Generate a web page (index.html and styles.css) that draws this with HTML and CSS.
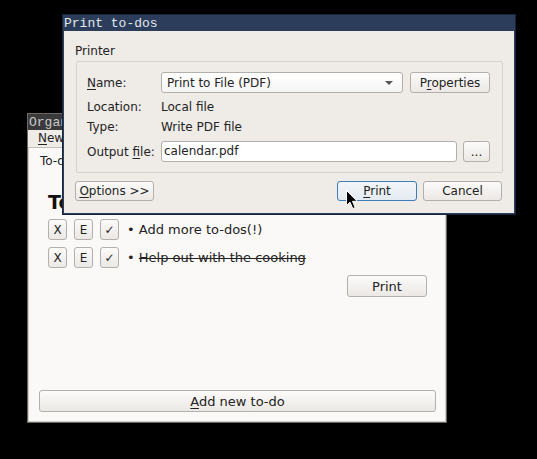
FILE: index.html
```html
<!DOCTYPE html>
<html>
<head>
<meta charset="utf-8">
<link rel="stylesheet" href="styles.css">
</head>
<body>
<div class="win back">
  <div class="titlebar gray">Organizer</div>
  <div class="menubar"><span class="menu"><u>N</u>ew</span></div>
  <div class="content">
    <div class="tablabel">To-do list</div>
    <div class="heading">To-dos</div>
    <div class="todo">
      <button class="btn sq">X</button><button class="btn sq">E</button><button class="btn sq">✓</button>
      <span class="item">• Add more to-dos(!)</span>
    </div>
    <div class="todo">
      <button class="btn sq">X</button><button class="btn sq">E</button><button class="btn sq">✓</button>
      <span class="item">• <s>Help out with the cooking</s></span>
    </div>
    <div class="printrow"><button class="btn wide">Print</button></div>
    <button class="btn addnew"><u>A</u>dd new to-do</button>
  </div>
</div>

<div class="win dialog">
  <div class="titlebar navy">Print to-dos</div>
  <div class="dbody">
    <div class="glabel">Printer</div>
    <div class="group">
      <div class="frow r-name">
        <span class="lbl"><u>N</u>ame:</span>
        <div class="combo"><span>Print to File (PDF)</span><span class="arrow"></span></div>
        <button class="btn props">P<u>r</u>operties</button>
      </div>
      <div class="frow r-loc"><span class="lbl">Location:</span><span>Local file</span></div>
      <div class="frow r-type"><span class="lbl">Type:</span><span>Write PDF file</span></div>
      <div class="frow r-out">
        <span class="lbl">Output <u>f</u>ile:</span>
        <div class="input">calendar.pdf</div>
        <button class="btn dots">...</button>
      </div>
    </div>
    <div class="actions">
      <button class="btn act"><u>O</u>ptions &gt;&gt;</button>
      <span class="spacer"></span>
      <button class="btn act primary"><u>P</u>rint</button>
      <button class="btn act">Cancel</button>
    </div>
  </div>
</div>

<svg class="cursor" width="13" height="20" viewBox="0 0 13 20">
  <path d="M0.5 0.5 L0.5 15.5 L4 12.2 L6.8 18.6 L9.2 17.6 L6.5 11.3 L11.2 11.3 Z" fill="#000" stroke="#fff" stroke-width="1" stroke-linejoin="round"/>
</svg>
</body>
</html>
```

FILE: styles.css
```css
html, body {
  margin: 0;
  padding: 0;
  background: #000;
  width: 537px;
  height: 459px;
  overflow: hidden;
  font-family: "DejaVu Sans", "Noto Sans", sans-serif;
  font-size: 12px;
  color: #232323;
}

u { text-decoration: underline; text-underline-offset: 2px; }

.win {
  position: absolute;
  box-sizing: border-box;
  display: flex;
  flex-direction: column;
}

.titlebar {
  height: 16px;
  flex: none;
  font-family: "Liberation Mono", "DejaVu Sans Mono", monospace;
  font-size: 13px;
  line-height: 17px;
  padding-left: 1px;
  white-space: nowrap;
  overflow: hidden;
}
.titlebar.gray { background: #3a3a3a; color: #c9c9c9; }
.titlebar.navy { background: #2b3d5b; color: #e4e8ee; }

/* back window */
.back {
  left: 27px;
  top: 113px;
  width: 420px;
  height: 310px;
  border: 1px solid #6a6866;
  background: #efebe7;
}
.menubar {
  height: 17px;
  flex: none;
  background: #efebe7;
  line-height: 17px;
  padding-left: 10px;
}
.content {
  flex: 1;
  background: #fbf9f7;
  border-top: 1px solid #c2beba;
  box-shadow: inset 1px 0 0 #d0ccc8, inset -1px 0 0 #d0ccc8, inset 0 -1px 0 #d0ccc8;
  display: flex;
  flex-direction: column;
  padding: 0 10px 10px 11px;
}
.tablabel {
  margin-top: 5px;
  line-height: 16px;
  padding-left: 1px;
}
.heading {
  margin-top: 21px;
  padding-left: 9px;
  font-size: 19px;
  font-weight: bold;
  line-height: 24px;
  color: #111;
}
.todo {
  display: flex;
  align-items: center;
  gap: 7px;
  margin-top: 5px;
  padding-left: 9px;
  height: 21px;
}
.todo + .todo { margin-top: 7px; }
.item { margin-left: 1px; white-space: nowrap; font-size: 13px; }
.item s { text-decoration-thickness: 1px; }

.btn {
  box-sizing: border-box;
  font-family: "DejaVu Sans", "Noto Sans", sans-serif;
  font-size: 12px;
  color: #232323;
  background: linear-gradient(#fcfbfa, #ebe8e5);
  border: 1px solid #b3afab;
  border-radius: 3px;
  padding: 0;
  margin: 0;
  white-space: nowrap;
}
.sq { width: 19px; height: 21px; font-size: 12px; }
.printrow {
  display: flex;
  justify-content: flex-end;
  margin-top: 7px;
  padding-right: 9px;
}
.wide { width: 80px; height: 22px; font-size: 13px; }
.addnew {
  margin-top: auto;
  height: 22px;
  width: 397px;
  font-size: 13px;
}

/* dialog */
.dialog {
  left: 62px;
  top: 14px;
  width: 454px;
  height: 201px;
  border: 1px solid #17243a;
  background: #2b3d5b;
}
.dbody {
  flex: 1;
  margin: 0 1px 1px 1px;
  background: #efebe7;
  padding: 11px 11px 0 12px;
  display: flex;
  flex-direction: column;
}
.glabel {
  line-height: 18px;
  margin-left: -1px;
  margin-bottom: -2px;
}
.group {
  margin-top: 3px;
  border: 1px solid #d6d2cd;
  border-radius: 2px;
  padding: 10px 12px 10px 10px;
  display: flex;
  flex-direction: column;
}
.frow {
  display: flex;
  align-items: center;
}
.lbl { width: 74px; flex: none; }
.r-name { height: 21px; }
.r-loc { height: 22px; margin-top: 3px; }
.r-type { height: 18px; margin-bottom: -1px; }
.r-out { height: 21px; margin-top: 6px; }

.combo {
  box-sizing: border-box;
  width: 242px;
  height: 21px;
  border: 1px solid #b3afab;
  border-radius: 3px;
  background: linear-gradient(#ffffff, #f6f5f4);
  display: flex;
  align-items: center;
  justify-content: space-between;
  padding: 0 9px 0 5px;
}
.arrow {
  width: 0;
  height: 0;
  border-left: 4px solid transparent;
  border-right: 4px solid transparent;
  border-top: 4px solid #555;
}
.props { width: 80px; height: 21px; margin-left: 7px; }
.input {
  box-sizing: border-box;
  width: 296px;
  height: 21px;
  border: 1px solid #b3afab;
  border-radius: 3px;
  background: #fff;
  line-height: 19px;
  padding-left: 2px;
}
.dots { width: 27px; height: 21px; margin-left: 6px; }

.actions {
  display: flex;
  align-items: center;
  margin-top: 8px;
  margin-left: -1px;
  margin-right: 1px;
  gap: 6px;
}
.spacer { flex: 1; }
.act { width: 79px; height: 20px; }
.act.primary {
  width: 80px;
  border-color: #3f7cb8;
  background: linear-gradient(#f3f6f9, #e3eaf1);
}

.cursor {
  position: absolute;
  left: 346px;
  top: 190px;
}
```
